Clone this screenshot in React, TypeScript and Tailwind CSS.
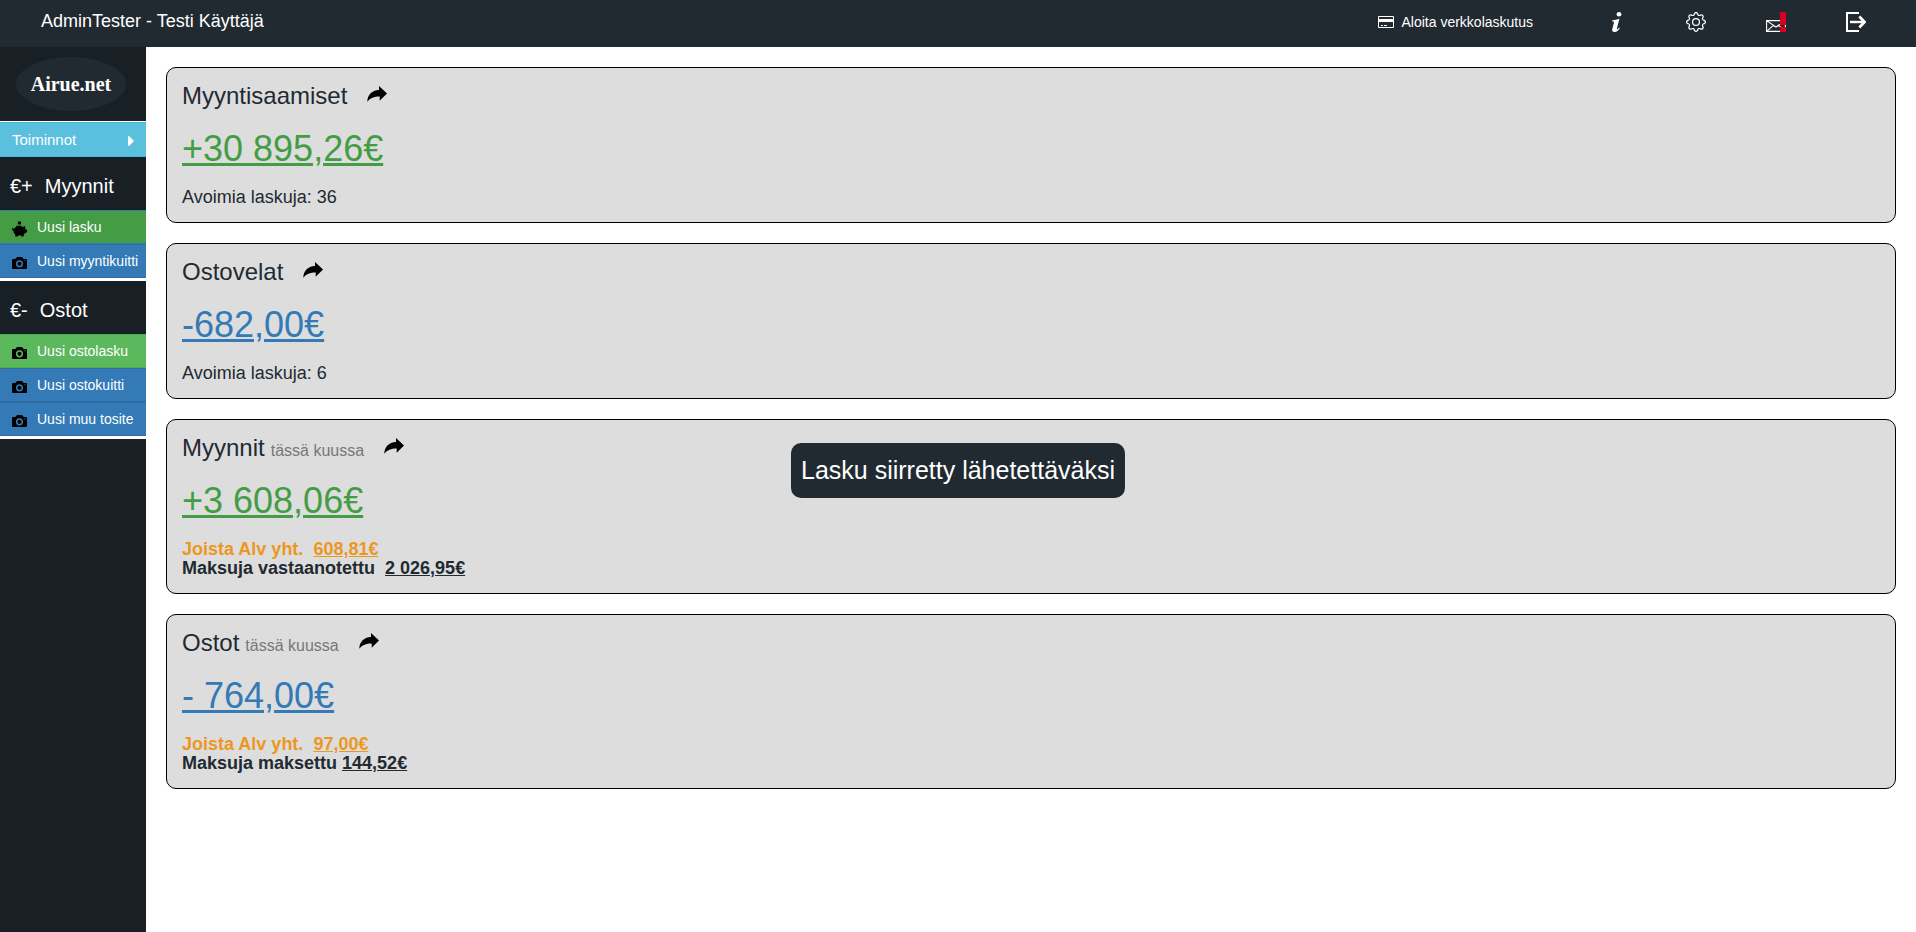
import type { ReactNode } from 'react'
import { BsGear } from 'react-icons/bs'

function CardIcon() {
  return (
    <svg className="size-4" viewBox="0 0 16 16" fill="#fff" aria-hidden="true">
      <path fillRule="evenodd" d="M1 2h14a1 1 0 0 1 1 1v10a1 1 0 0 1-1 1H1a1 1 0 0 1-1-1V3a1 1 0 0 1 1-1zm0 1v2h14V3zm0 5v5h14V8z" />
      <path d="M3 11h2v1H3zM6 11h3v1H6z" />
    </svg>
  )
}

function InfoIcon() {
  return (
    <svg className="size-5" viewBox="0 0 20 20" fill="#fff" aria-hidden="true">
      <ellipse cx="13" cy="2.3" rx="2.400" ry="2.200" />
      <path d="M6.200 8.200c2.600-.1 4.600-.6 7.200-1.400L10.900 16.400c-.2.900.3 1.100.9.600.6-.4 1-.9 1.500-1.500l.6.500c-1.500 2.400-3.200 4-5.400 4-1.900 0-2.700-1.100-2.300-2.700l1.700-6.600c.2-.9-.2-1.300-1.700-1.400z" />
    </svg>
  )
}

function MailIcon() {
  return (
    <svg className="size-5" viewBox="0 0 20 20" fill="none" aria-hidden="true">
      <path d="M.6 8.600h18.800v10.800H.6zM.6 8.600l9.400 6.400 9.400-6.400M.6 19.400l6.800-6M19.400 19.400l-6.800-6" stroke="#fff" strokeWidth="1.100" />
      <path d="M14 0h6v13h-6zM14 15h6v5h-6z" fill="#d9001f" />
    </svg>
  )
}

function LogoutIcon() {
  return (
    <svg className="size-5" viewBox="0 0 20 20" fill="none" stroke="#fff" strokeWidth="2" aria-hidden="true">
      <path d="M13 1H1v18h12" />
      <path d="M4 10h13" strokeWidth="2.400" />
      <path d="M13.300 4.500 18.600 10l-5.300 5.500" strokeWidth="2.600" />
    </svg>
  )
}

function ShareIcon() {
  return (
    <svg className="size-5" viewBox="0 0 20 20" fill="#000" aria-hidden="true">
      <path d="M12 2l8 7.500-7.300 7.200v-4.200C7 12.500 3.200 14 .3 17.800.5 11 4.500 6.500 12 6z" />
    </svg>
  )
}

function CameraIcon() {
  return (
    <svg className="h-4 w-[15px]" viewBox="0 0 15 16" fill="#000" aria-hidden="true">
      <path fillRule="evenodd" d="M1 4h2.300L5 2h5l1.700 2H14a1 1 0 0 1 1 1v8a1 1 0 0 1-1 1H1a1 1 0 0 1-1-1V5a1 1 0 0 1 1-1zM7.500 5.200a3.600 3.600 0 1 0 0 7.200 3.600 3.600 0 0 0 0-7.200zm5 .1v1h1v-1z" />
      <circle cx="7.500" cy="8.800" r="2.100" />
    </svg>
  )
}

function PiggyIcon() {
  return (
    <svg className="h-4 w-[15px]" viewBox="0 0 15 16" fill="#000" aria-hidden="true">
      <circle cx="7.500" cy="2" r="1.700" />
      <path d="M3.800 4.800h6.400l-.6 1.300h1.200L13.200 5v2.400l1 1.300h.8v2.600l-1.700.7-1.600 1.600v2H9.300V14.500H6v1.100H3.300v-2C2 12.600 1.500 11.500 1.500 10 .5 9.700 0 8.500.2 7h1c0 .7.200 1.100.7 1.200.4-1.100 1.200-1.800 2.900-2.100z" />
    </svg>
  )
}

type MenuButtonProps = { color: string; icon: ReactNode; children: ReactNode }

function MenuButton({ color, icon, children }: MenuButtonProps) {
  return (
    <button type="button" className={`flex h-[34px] w-full items-center gap-[10px] border-y pl-3 text-sm whitespace-nowrap text-white ${color}`}>
      <span className="pt-1">{icon}</span>
      {children}
    </button>
  )
}

function MenuHeading({ sign, title }: { sign: string; title: string }) {
  return (
    <h2 className="flex h-[53px] items-center gap-3 pt-1 pl-[10px] text-xl text-white">
      <span>{sign}</span>
      <span>{title}</span>
    </h2>
  )
}

type SummaryCardProps = { title: string; period?: string; amount: string; color: string; children: ReactNode }

function SummaryCard({ title, period, amount, color, children }: SummaryCardProps) {
  return (
    <section className="rounded-[10px] border border-black bg-[#ddd] p-[15px]">
      <div className="flex items-center">
        <h3 className="text-2xl leading-[26px]">
          {title}
          {period && <small className="ml-[6px] text-base leading-none text-[#777]">{period}</small>}
        </h3>
        <a href="#" className="-mt-1 ml-5" aria-label={title}><ShareIcon /></a>
      </div>
      <p className="mt-5 text-4xl leading-10">
        <a href="#" className={`underline ${color}`}>{amount}</a>
      </p>
      {children}
    </section>
  )
}

const blue = 'bg-[#337ab7] border-[#2e6da4]'

export default function App() {
  return (
    <div className="flex min-h-screen flex-col bg-white font-['Liberation_Sans',Arial,sans-serif] text-[#222a31]">
      <header className="flex h-[47px] items-center bg-[#222a31] pr-[50px] pb-[3px] pl-[41px] text-white">
        <span className="pb-[2px] text-lg leading-5">AdminTester - Testi Käyttäjä</span>
        <nav className="ml-auto flex items-center gap-[60px]">
          <a href="#" className="mr-[13px] flex items-center gap-[7px] text-sm"><CardIcon />Aloita verkkolaskutus</a>
          <a href="#" aria-label="Info"><InfoIcon /></a>
          <a href="#" aria-label="Asetukset"><BsGear className="size-5" /></a>
          <a href="#" aria-label="Viestit"><MailIcon /></a>
          <a href="#" aria-label="Kirjaudu ulos"><LogoutIcon /></a>
        </nav>
      </header>

      <div className="flex flex-1">
        <aside className="w-[146px] shrink-0 bg-[#182026]">
          <div className="flex h-[75px] items-center border-b border-white pl-4">
            <a href="#" className="flex h-[54px] w-[110px] items-center justify-center rounded-[50%] bg-[#222a31] font-['Liberation_Serif',serif] text-xl font-bold text-white">Airue.net</a>
          </div>
          <button type="button" className="flex h-[35px] w-full items-center justify-between border-y border-[#46b8da] bg-[#5bc0de] px-3 pt-[2px] text-[15px] text-white">
            Toiminnot
            <svg className="h-[10px] w-[6px]" viewBox="0 0 6 10" fill="#fff" aria-hidden="true"><path d="M0 0h1l5 5-5 5H0z" /></svg>
          </button>
          <MenuHeading sign="€+" title="Myynnit" />
          <div className="border-b-3 border-white">
            <MenuButton color="bg-[#449d44] border-[#337ab7]" icon={<PiggyIcon />}>Uusi lasku</MenuButton>
            <MenuButton color={blue} icon={<CameraIcon />}>Uusi myyntikuitti</MenuButton>
          </div>
          <MenuHeading sign="€-" title="Ostot" />
          <div className="border-b-3 border-white">
            <MenuButton color="bg-[#5cb85c] border-[#4cae4c]" icon={<CameraIcon />}>Uusi ostolasku</MenuButton>
            <MenuButton color={blue} icon={<CameraIcon />}>Uusi ostokuitti</MenuButton>
            <MenuButton color={blue} icon={<CameraIcon />}>Uusi muu tosite</MenuButton>
          </div>
        </aside>

        <main className="flex min-w-0 flex-1 flex-col gap-5 p-5">
          <SummaryCard title="Myyntisaamiset" amount="+30 895,26€" color="text-[#449d44]">
            <p className="mt-[19px] text-lg leading-[19px]">Avoimia laskuja: 36</p>
          </SummaryCard>
          <SummaryCard title="Ostovelat" amount="-682,00€" color="text-[#337ab7]">
            <p className="mt-[19px] text-lg leading-[19px]">Avoimia laskuja: 6</p>
          </SummaryCard>
          <SummaryCard title="Myynnit" period="tässä kuussa" amount="+3 608,06€" color="text-[#449d44]">
            <div className="mt-[19px] text-lg leading-[19px] font-bold">
              <p className="text-[#ec971f]">Joista Alv yht. &nbsp;<a href="#" className="underline">608,81€</a></p>
              <p>Maksuja vastaanotettu &nbsp;<a href="#" className="underline">2 026,95€</a></p>
            </div>
          </SummaryCard>
          <SummaryCard title="Ostot" period="tässä kuussa" amount="- 764,00€" color="text-[#337ab7]">
            <div className="mt-[19px] text-lg leading-[19px] font-bold">
              <p className="text-[#ec971f]">Joista Alv yht. &nbsp;<a href="#" className="underline">97,00€</a></p>
              <p>Maksuja maksettu <a href="#" className="underline">144,52€</a></p>
            </div>
          </SummaryCard>
        </main>
      </div>

      <div role="status" className="fixed top-[443px] left-1/2 -translate-x-1/2 rounded-[10px] bg-[#222a31] p-[10px] text-[25px] leading-[35px] whitespace-nowrap text-white">
        Lasku siirretty lähetettäväksi
      </div>
    </div>
  )
}
